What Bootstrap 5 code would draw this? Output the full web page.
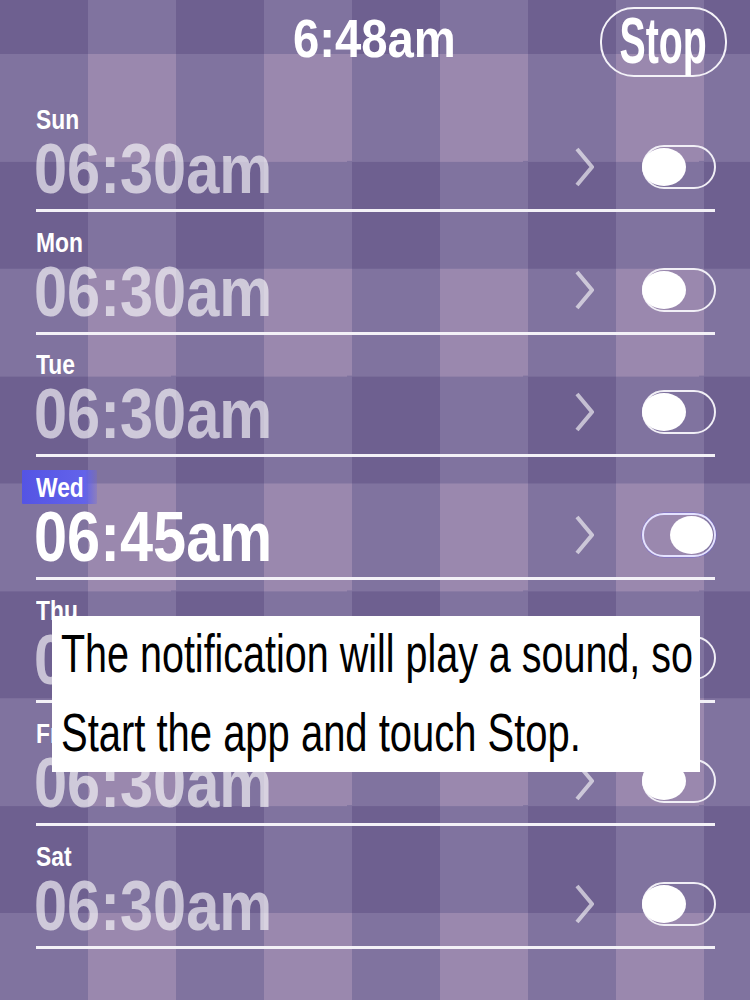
<!DOCTYPE html>
<html lang="en">
<head>
<meta charset="utf-8">
<title>Alarm</title>
<link href="https://cdn.jsdelivr.net/npm/bootstrap@5.3.0/dist/css/bootstrap.min.css" rel="stylesheet">
<style>
html,body{height:1000px;overflow:hidden}
body{
  position:relative;
  font-family:"Liberation Sans",Arial,sans-serif;
  color:#fff;
  background-color:#6e6090;
  background-image:conic-gradient(#9a88ae 0 25%,#80739f 0 50%,#6e6090 0 75%,#80739f 0);
  background-size:176px 214.75px;
  background-position:0 54px;
}
.squeeze{display:block;width:max-content;transform-origin:0 50%;transform:scaleX(.83)}
.topbar{height:89px;display:grid;grid-template-columns:1fr 162px 1fr;align-items:start;padding:0 23px 0 0}
.nowtime{grid-column:2;font-weight:700;font-size:54px;line-height:76px;margin-left:10px}
.nowtime .squeeze{transform:scaleX(.875)}
.stopbtn{grid-column:3;justify-self:end;width:127px;height:70px;margin-top:7px;padding:0;color:#fff;background:transparent;
  border:2.5px solid #f4f2f8;border-radius:34px;display:flex;justify-content:center;align-items:center;overflow:visible}
.stopbtn span{display:block;font-weight:700;font-size:64px;line-height:66px;transform:scaleX(.613);margin-top:-3px}
.alarmlist{padding:0 35px 0 36px}
.alarmrow{height:122.83px;border-bottom:3px solid #f3f1f7;display:flex;align-items:flex-end;padding-bottom:5px}
.alarmtext{flex:1 1 auto;min-width:0}
.dayname{font-weight:700;font-size:27.5px;line-height:29px;width:max-content;margin-bottom:0}
.dayname.today{margin-left:-14px;padding:3.5px 0 2px 14px;margin-bottom:-2px;width:75px;background:linear-gradient(90deg,#5454e4 0,#6363ea 84%,rgba(100,100,235,.25) 100%);border-radius:1px}
.timeval{font-weight:700;font-size:71px;line-height:70px;margin-left:-2px;color:rgba(255,255,255,.62)}
.timeval .squeeze{transform:scaleX(.838)}
.timeval.active{color:#fff}
.chev{width:20px;height:40px;margin:0 48px 17px 0;flex:none}
.togglebox{width:74px;height:44px;margin:0 -1px 15px 0;flex:none;border:2.5px solid #f1eff6;border-radius:22px;display:flex;align-items:center}
.togglebox i{display:block;width:44px;height:38px;margin-left:-2px;background:#fff;border-radius:50%;flex:none}
.togglebox.on{border-color:#e4e2ff;box-shadow:0 0 0 .5px rgba(90,80,240,.55)}
.togglebox.on i{margin-left:auto;margin-right:1px;width:43px}
.notice{position:absolute;left:52px;top:616px;width:648px;height:156px;background:#fff;color:#000;padding:0 0 0 9px;font-weight:400;font-size:54px;white-space:nowrap}
.notice .squeeze{transform:scaleX(.74);line-height:82px}
.notice .squeeze.tighter{transform:scaleX(.731);line-height:75px}
</style>
</head>
<body>
<header class="topbar">
  <div class="nowtime"><span class="squeeze">6:48am</span></div>
  <button type="button" class="btn stopbtn"><span>Stop</span></button>
</header>
<main class="alarmlist">
  <div class="alarmrow"><div class="alarmtext"><div class="dayname"><span class="squeeze">Sun</span></div><div class="timeval"><span class="squeeze">06:30am</span></div></div>
    <svg class="chev" viewBox="0 0 20 40" fill="none"><path d="M3 2 L18 20 L3 38" stroke="#fff" stroke-opacity=".6" stroke-width="4"/></svg>
    <div class="togglebox"><i></i></div></div>
  <div class="alarmrow"><div class="alarmtext"><div class="dayname"><span class="squeeze">Mon</span></div><div class="timeval"><span class="squeeze">06:30am</span></div></div>
    <svg class="chev" viewBox="0 0 20 40" fill="none"><path d="M3 2 L18 20 L3 38" stroke="#fff" stroke-opacity=".6" stroke-width="4"/></svg>
    <div class="togglebox"><i></i></div></div>
  <div class="alarmrow"><div class="alarmtext"><div class="dayname"><span class="squeeze">Tue</span></div><div class="timeval"><span class="squeeze">06:30am</span></div></div>
    <svg class="chev" viewBox="0 0 20 40" fill="none"><path d="M3 2 L18 20 L3 38" stroke="#fff" stroke-opacity=".6" stroke-width="4"/></svg>
    <div class="togglebox"><i></i></div></div>
  <div class="alarmrow"><div class="alarmtext"><div class="dayname today"><span class="squeeze">Wed</span></div><div class="timeval active"><span class="squeeze">06:45am</span></div></div>
    <svg class="chev" viewBox="0 0 20 40" fill="none"><path d="M3 2 L18 20 L3 38" stroke="#fff" stroke-opacity=".6" stroke-width="4"/></svg>
    <div class="togglebox on"><i></i></div></div>
  <div class="alarmrow"><div class="alarmtext"><div class="dayname"><span class="squeeze">Thu</span></div><div class="timeval"><span class="squeeze">06:30am</span></div></div>
    <svg class="chev" viewBox="0 0 20 40" fill="none"><path d="M3 2 L18 20 L3 38" stroke="#fff" stroke-opacity=".6" stroke-width="4"/></svg>
    <div class="togglebox"><i></i></div></div>
  <div class="alarmrow"><div class="alarmtext"><div class="dayname"><span class="squeeze">Fri</span></div><div class="timeval"><span class="squeeze">06:30am</span></div></div>
    <svg class="chev" viewBox="0 0 20 40" fill="none"><path d="M3 2 L18 20 L3 38" stroke="#fff" stroke-opacity=".6" stroke-width="4"/></svg>
    <div class="togglebox"><i></i></div></div>
  <div class="alarmrow"><div class="alarmtext"><div class="dayname"><span class="squeeze">Sat</span></div><div class="timeval"><span class="squeeze">06:30am</span></div></div>
    <svg class="chev" viewBox="0 0 20 40" fill="none"><path d="M3 2 L18 20 L3 38" stroke="#fff" stroke-opacity=".6" stroke-width="4"/></svg>
    <div class="togglebox"><i></i></div></div>
</main>
<div class="notice"><span class="squeeze tighter">The notification will play a sound, so</span><span class="squeeze">Start the app and touch Stop.</span></div>
<script src="https://cdn.jsdelivr.net/npm/bootstrap@5.3.0/dist/js/bootstrap.bundle.min.js"></script>
</body>
</html>
